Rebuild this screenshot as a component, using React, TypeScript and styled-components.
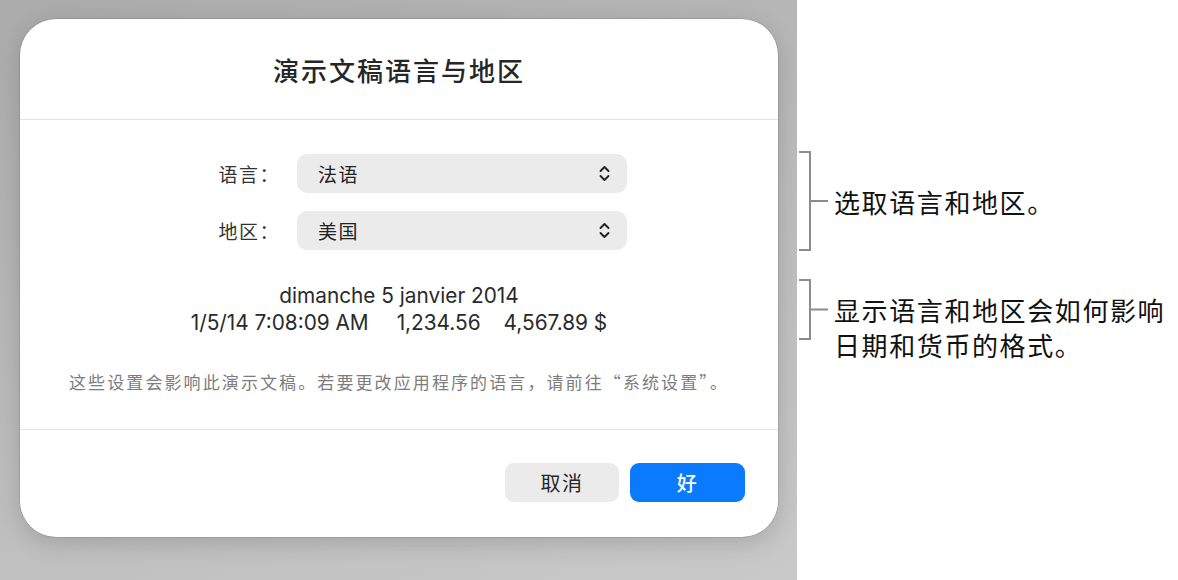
import styled, { createGlobalStyle } from 'styled-components';

const GlobalStyle = createGlobalStyle`
  html, body {
    margin: 0;
    padding: 0;
    background: #ffffff;
  }
  * {
    box-sizing: border-box;
  }
`;

const CJK = `"Noto Sans CJK SC", "Noto Sans", sans-serif`;
const LATIN = `"Inter", "Noto Sans CJK SC", sans-serif`;

const ANNOTATIONS = [
  { id: 1, height: 100, text: ['选取语言和地区。'], marginTop: 151 },
  { id: 2, height: 61, text: ['显示语言和地区会如何影响', '日期和货币的格式。'], marginTop: 28 },
];

const FIELDS = [
  { id: 'lang', label: '语言：', value: '法语' },
  { id: 'region', label: '地区：', value: '美国' },
];

/* ── layout ── */

const Page = styled.div`
  display: flex;
  width: 1178px;
  height: 580px;
  overflow: hidden;
`;

// grey backdrop holding the sheet
const Backdrop = styled.div`
  width: 797px;
  height: 580px;
  flex-shrink: 0;
  padding: 19px 19px 0 20px;
  background: linear-gradient(160deg, #ababab 0%, #bdbdbd 55%, #c9c9c9 100%);
`;

const Sheet = styled.div`
  width: 758px;
  height: 518px;
  background: #ffffff;
  border-radius: 36px;
  box-shadow: 0 0 0 0.5px rgba(0, 0, 0, 0.18), 0 6px 24px rgba(0, 0, 0, 0.16);
  display: flex;
  flex-direction: column;
  overflow: hidden;
`;

const Header = styled.div`
  height: 101px;
  display: flex;
  align-items: center;
  justify-content: center;
  border-bottom: 1px solid #e4e4e4;
`;

const Title = styled.h1`
  margin: 0;
  font-family: ${CJK};
  font-size: 26px;
  font-weight: 500;
  letter-spacing: 2px;
  color: #262626;
`;

const Body = styled.div`
  padding: 34px 0 35px;
  display: flex;
  flex-direction: column;
  border-bottom: 1px solid #e4e4e4;
`;

const Form = styled.div`
  display: grid;
  grid-template-columns: 100px 330px;
  column-gap: 17px;
  row-gap: 18px;
  margin-left: 160px;
  align-items: center;
`;

const FieldLabel = styled.span`
  text-align: right;
  font-family: ${CJK};
  font-size: 19px;
  letter-spacing: 1.5px;
  color: #333333;
`;

const Select = styled.div`
  height: 39px;
  border-radius: 10px;
  background: #ebebeb;
  padding: 0 17px 0 21px;
  display: flex;
  align-items: center;
  justify-content: space-between;
  font-family: ${CJK};
  font-size: 19px;
  letter-spacing: 1.5px;
  color: #222222;
`;

const Preview = styled.div`
  margin-top: 32px;
  text-align: center;
  font-family: ${LATIN};
  font-size: 20.8px;
  line-height: 27px;
  color: #2a2a2a;
`;

const PreviewLine = styled.div`
  display: flex;
  justify-content: center;
`;

const PreviewItem = styled.span<{ $gap?: number }>`
  margin-left: ${({ $gap }) => $gap ?? 0}px;
`;

const Note = styled.p`
  margin: 34px 0 0;
  text-align: center;
  font-family: ${CJK};
  font-size: 17px;
  letter-spacing: 2.1px;
  line-height: 24px;
  color: #7d7d7d;
`;

const Footer = styled.div`
  flex: 1;
  display: flex;
  justify-content: flex-end;
  align-items: flex-start;
  gap: 11px;
  padding: 33px 33px 0 0;
`;

const Button = styled.button<{ $primary?: boolean }>`
  height: 39px;
  width: ${({ $primary }) => ($primary ? 115 : 114)}px;
  border: none;
  border-radius: 9px;
  background: ${({ $primary }) => ($primary ? '#0a7aff' : '#ebebeb')};
  color: ${({ $primary }) => ($primary ? '#ffffff' : '#262626')};
  font-family: ${CJK};
  font-size: 20px;
  font-weight: ${({ $primary }) => ($primary ? 500 : 400)};
  letter-spacing: 1.5px;
  padding: 0;
`;

/* ── annotations ── */

const Side = styled.div`
  flex: 1;
  display: flex;
  flex-direction: column;
  background: #ffffff;
`;

const Annotation = styled.div<{ $top: number; $h: number }>`
  display: flex;
  align-items: flex-start;
  margin-top: ${({ $top }) => $top}px;
  height: ${({ $h }) => $h}px;
`;

const AnnotationText = styled.div<{ $pad: number }>`
  margin-left: 5px;
  padding-top: ${({ $pad }) => $pad}px;
  font-family: ${CJK};
  font-size: 26px;
  letter-spacing: 1.6px;
  line-height: 35px;
  color: #111111;
  white-space: nowrap;
`;

const Chevrons = () => (
  <svg width="11" height="17" viewBox="0 0 11 17" fill="none">
    <path
      d="M1.5 6 L5.5 2 L9.5 6 M1.5 11 L5.5 15 L9.5 11"
      stroke="#222"
      strokeWidth="1.9"
      strokeLinecap="round"
      strokeLinejoin="round"
    />
  </svg>
);

const Bracket = ({ h }: { h: number }) => (
  <svg width="32" height={h} viewBox={`0 0 32 ${h}`} fill="none" style={{ flexShrink: 0 }}>
    <path
      d={`M2 1 H13 V${h - 1} H2 M13 ${h / 2} H31`}
      stroke="#8c8c8c"
      strokeWidth="2"
    />
  </svg>
);

const App: React.FC = () => {
  return (
    <Page>
      <GlobalStyle />
      <Backdrop>
        <Sheet>
          <Header>
            <Title>演示文稿语言与地区</Title>
          </Header>

          <Body>
            <Form>
              {FIELDS.map((f) => [
                <FieldLabel key={f.id + '-l'}>{f.label}</FieldLabel>,
                <Select key={f.id + '-s'}>
                  {f.value}
                  <Chevrons />
                </Select>,
              ])}
            </Form>

            <Preview>
              <PreviewLine>dimanche 5 janvier 2014</PreviewLine>
              <PreviewLine>
                <PreviewItem>1/5/14 7:08:09 AM</PreviewItem>
                <PreviewItem $gap={28}>1,234.56</PreviewItem>
                <PreviewItem $gap={23}>4,567.89 $</PreviewItem>
              </PreviewLine>
            </Preview>

            <Note>这些设置会影响此演示文稿。若要更改应用程序的语言，请前往“系统设置”。</Note>
          </Body>

          <Footer>
            <Button>取消</Button>
            <Button $primary>好</Button>
          </Footer>
        </Sheet>
      </Backdrop>

      <Side>
        {ANNOTATIONS.map((a) => (
          <Annotation key={a.id} $top={a.marginTop} $h={a.height}>
            <Bracket h={a.height} />
            <AnnotationText $pad={a.height / 2 - 17.5}>
              {a.text.map((line) => (
                <div key={line}>{line}</div>
              ))}
            </AnnotationText>
          </Annotation>
        ))}
      </Side>
    </Page>
  );
};

export default App;
